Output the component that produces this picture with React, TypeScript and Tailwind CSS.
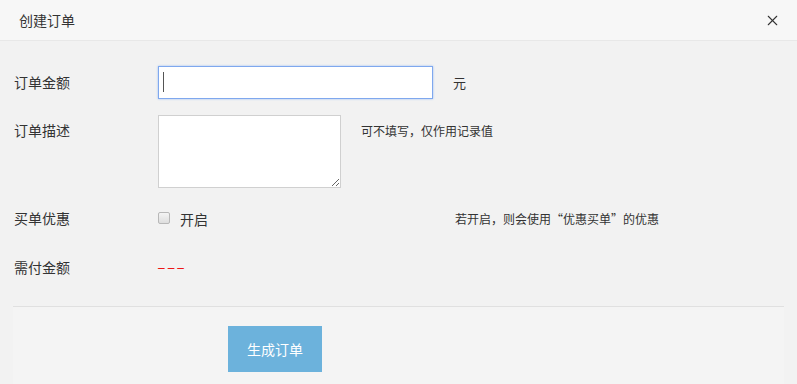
import { X } from 'lucide-react'

const font = { fontFamily: '"Noto Sans CJK SC", "Liberation Sans", sans-serif' }

export default function App() {
  return (
    <div className="w-[797px] h-[384px] overflow-hidden bg-[#f2f2f2] text-[#333]" style={font}>
      {/* Header */}
      <div className="h-[41px] bg-[#f7f7f7] border-b border-[#e8e8e8] flex items-center justify-between pl-[19px] pr-[16px]">
        <span className="text-[14px] leading-none">创建订单</span>
        <X className="w-[17px] h-[17px] text-[#333]" strokeWidth={1.5} />
      </div>

      {/* Form */}
      <div className="pl-[14px] pt-[25px]">
        {/* Amount */}
        <div className="flex items-center h-[33px]">
          <label className="w-[144px] text-[14px]">订单金额</label>
          <div className="relative">
            <input
              type="text"
              readOnly
              className="block w-[275px] h-[33px] bg-white border border-[#7fa8ee] shadow-[0_0_2px_#9cbef5] outline-none px-2"
            />
            <span className="absolute left-[5px] top-[6px] w-px h-[20px] bg-[#555]" />
          </div>
          <span className="ml-[20px] text-[13px]">元</span>
        </div>

        {/* Description */}
        <div className="flex items-start mt-[16px]">
          <label className="w-[144px] text-[14px] pt-[5px]">订单描述</label>
          <textarea className="block w-[183px] h-[73px] bg-white border border-[#d0d0d0] outline-none" />
          <span className="ml-[20px] pt-[7px] text-[12px]">可不填写，仅作用记录值</span>
        </div>

        {/* Discount */}
        <div className="flex items-center mt-[20px] h-[20px]">
          <label className="w-[144px] text-[14px]">买单优惠</label>
          <input
            type="checkbox"
            className="m-0 w-[12px] h-[12px] appearance-none rounded-[2px] border border-[#b8b8b8] bg-gradient-to-b from-[#f4f4f4] to-[#dedede]"
          />
          <span className="ml-[10px] text-[14px] w-[275px] pt-[2px]">开启</span>
          <span className="text-[12px] pt-[2px]">若开启，则会使用“优惠买单”的优惠</span>
        </div>

        {/* Pay amount */}
        <div className="flex items-center mt-[29px] h-[20px]">
          <label className="w-[144px] text-[14px]">需付金额</label>
          <span className="text-[12px] text-[#ee0000] tracking-[3px] leading-none pt-[1px] font-['Liberation_Sans',sans-serif]">–––</span>
        </div>
      </div>

      {/* Footer */}
      <div className="mx-[13px] mt-[29px] border-t border-[#e0e0e0] bg-[#f4f4f4] h-[100px] pt-[19px] pl-[215px]">
        <button className="w-[94px] h-[46px] bg-[#6cb2dc] text-white text-[14px]">生成订单</button>
      </div>
    </div>
  )
}
